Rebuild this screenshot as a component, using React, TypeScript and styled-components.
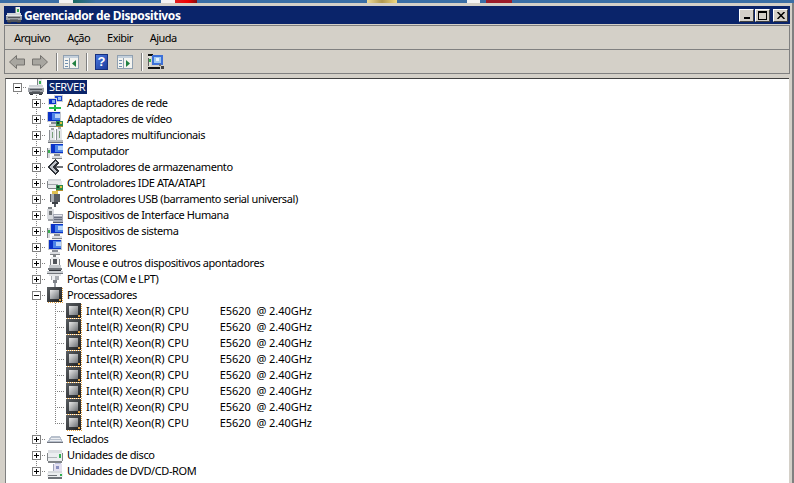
import React from 'react';
import styled, { createGlobalStyle } from 'styled-components';

const GlobalStyle = createGlobalStyle`
  html, body {
    margin: 0;
    padding: 0;
    width: 794px;
    height: 483px;
    overflow: hidden;
    background: #d4d0c8;
    font-family: "Noto Sans", "Liberation Sans", Arial, sans-serif;
    font-size: 11px;
    color: #000;
  }
`;

const DesktopStrip = styled.div`
  display: flex;
  height: 3px;
  background: #3a6ea5;
`;

const StripBit = styled.div<{ $left: number; $width: number; $fill: string }>`
  margin-left: ${p => p.$left}px;
  width: ${p => p.$width}px;
  background: ${p => p.$fill};
`;

const Frame = styled.div`
  display: flex;
  flex-direction: column;
  height: 480px;
  box-sizing: border-box;
  padding: 3px 2px 0 4px;
  background: #d4d0c8;
  border-right: 2px solid #808080;
`;

const TitleBar = styled.div`
  display: flex;
  align-items: center;
  height: 18px;
  flex: none;
  background: #0a246a;
  color: #fff;
  padding-left: 2px;
  padding-right: 2px;
`;

const TitleText = styled.div`
  font-weight: 700;
  font-size: 12px;
  letter-spacing: -0.37px;
  margin-left: 2px;
  flex: 1;
  white-space: nowrap;
`;

const WinButton = styled.div<{ $gap?: number }>`
  width: 15px;
  height: 13px;
  box-sizing: border-box;
  margin-left: ${p => p.$gap ?? 1}px;
  background: #d4d0c8;
  border-top: 1px solid #fff;
  border-left: 1px solid #fff;
  border-right: 1px solid #404040;
  border-bottom: 1px solid #404040;
  display: flex;
  align-items: center;
  justify-content: center;
`;

const Band = styled.div<{ $top?: boolean }>`
  display: flex;
  align-items: center;
  flex: none;
  height: ${p => (p.$top ? 25 : 24)}px;
  box-sizing: border-box;
  border-top: ${p => (p.$top ? '1px solid #808080' : '0')};
  border-bottom: 1px solid #808080;
  border-left: 1px solid #808080;
  border-right: 1px solid #808080;
  margin-top: ${p => (p.$top ? 1 : 0)}px;
`;

const MenuBar = styled(Band)`
  padding-left: 9px;
  gap: 17px;
`;

const MenuItem = styled.span`
  font-size: 11px;
  letter-spacing: -0.55px;
  color: #000;
`;

const ToolBar = styled(Band)`
  padding-left: 4px;
`;

const ToolIcon = styled.div<{ $left?: number }>`
  width: 16px;
  height: 16px;
  flex: none;
  margin-left: ${p => p.$left ?? 0}px;
`;

const ToolSep = styled.div<{ $left: number }>`
  width: 1px;
  height: 18px;
  flex: none;
  margin-left: ${p => p.$left}px;
  background: #808080;
  box-shadow: 1px 0 0 #fff;
`;

const HelpIcon = styled.div`
  width: 13px;
  height: 16px;
  flex: none;
  margin-left: 8px;
  background: linear-gradient(135deg, #4a78e0, #1c3c9c);
  border: 1px solid #16307e;
  box-sizing: border-box;
  color: #fff;
  font-family: "Liberation Sans", Arial, sans-serif;
  font-weight: 700;
  font-size: 13px;
  line-height: 14px;
  text-align: center;
`;

const Client = styled.div`
  flex: 1;
  min-height: 0;
  margin-top: 4px;
  margin-left: 1px;
  margin-right: 1px;
  background: #fff;
  border-top: 1px solid #404040;
  border-left: 1px solid #808080;
  padding-left: 2px;
  overflow: hidden;
`;

const Row = styled.div`
  display: flex;
  align-items: center;
  height: 16px;
  white-space: pre;
`;

const dotV = 'repeating-linear-gradient(to bottom, #808080 0 1px, transparent 1px 2px)';
const dotH = 'repeating-linear-gradient(to right, #808080 0 1px, transparent 1px 2px)';

type GuideKind = 'none' | 'root' | 'through' | 'last' | 'pipe';

const guideBackground = (k: GuideKind) => {
  const horiz = `${dotH} 9px 8px / 10px 1px no-repeat`;
  const full = `${dotV} 9px 0 / 1px 16px no-repeat`;
  const half = `${dotV} 9px 0 / 1px 8px no-repeat`;
  const lower = `${dotV} 9px 8px / 1px 8px no-repeat`;
  if (k === 'root') return `${horiz}, ${lower}`;
  if (k === 'through') return `${horiz}, ${full}`;
  if (k === 'last') return `${horiz}, ${half}`;
  if (k === 'pipe') return full;
  return 'none';
};

const Gutter = styled.div<{ $kind: GuideKind }>`
  width: 19px;
  height: 16px;
  flex: none;
  display: flex;
  align-items: center;
  padding-left: 5px;
  box-sizing: border-box;
  background: ${p => guideBackground(p.$kind)};
`;

const Expander = styled.div`
  width: 9px;
  height: 9px;
  box-sizing: border-box;
  border: 1px solid #808080;
  background: #fff;
  position: relative;
  display: flex;
  align-items: center;
  justify-content: center;
`;

const Dash = styled.div`
  width: 5px;
  height: 1px;
  background: #000;
`;

const Stem = styled.div`
  position: absolute;
  left: 3px;
  top: 1px;
  width: 1px;
  height: 5px;
  background: #000;
`;

const IconSlot = styled.div<{ $left: number }>`
  width: 16px;
  height: 16px;
  flex: none;
  margin-left: ${p => p.$left}px;
  background: #fff;
`;

const Label = styled.span<{ $selected?: boolean; $spread?: boolean }>`
  margin-left: ${p => (p.$selected ? 3 : 2)}px;
  padding: 0 2px;
  line-height: 14px;
  height: 14px;
  font-size: 11px;
  letter-spacing: ${p => (p.$spread ? '-0.05px' : p.$selected ? '-0.4px' : '-0.4px')};
  background: ${p => (p.$selected ? '#0a246a' : 'transparent')};
  color: ${p => (p.$selected ? '#fff' : '#000')};
`;

const Svg: React.FC<{ children: React.ReactNode }> = ({ children }) => (
  <svg width="16" height="16" viewBox="0 0 16 16" shapeRendering="crispEdges" style={{ display: 'block' }}>
    {children}
  </svg>
);

const R: React.FC<{ x: number; y: number; w: number; h: number; f: string }> = ({ x, y, w, h, f }) => (
  <rect x={x} y={y} width={w} height={h} fill={f} />
);

const Monitor: React.FC<{ x?: number }> = ({ x = 2 }) => (
  <>
    <R x={x} y={0} w={14} h={11} f="#c4c8d0" />
    <R x={x} y={0} w={14} h={1} f="#f4f4f4" />
    <R x={x + 1} y={1} w={12} h={9} f="#0a32c8" />
    <R x={x + 5} y={2} w={8} h={7} f="#4c84e8" />
    <R x={x + 8} y={3} w={5} h={4} f="#b8d4f8" />
    <R x={x + 4} y={11} w={6} h={2} f="#8a8e96" />
    <R x={x + 2} y={13} w={10} h={2} f="#dcdee2" />
    <R x={x + 2} y={15} w={10} h={1} f="#808488" />
  </>
);

const GreenCard = () => (
  <>
    <R x={9} y={10} w={7} h={5} f="#2f8a4c" />
    <R x={10} y={11} w={2} h={2} f="#10401f" />
    <R x={13} y={11} w={2} h={2} f="#e0c040" />
    <R x={9} y={15} w={7} h={1} f="#b09030" />
  </>
);

const ServerIcon = () => (
  <Svg>
    <R x={9} y={0} w={5} h={6} f="#e8eaec" />
    <R x={9} y={0} w={1} h={6} f="#808488" />
    <R x={11} y={2} w={2} h={3} f="#38b050" />
    <R x={1} y={6} w={14} h={2} f="#d0d4d8" />
    <R x={0} y={8} w={16} h={5} f="#9ca0a6" />
    <R x={0} y={8} w={16} h={1} f="#e4e6e8" />
    <R x={2} y={10} w={12} h={1} f="#50545a" />
    <R x={4} y={12} w={8} h={1} f="#70747a" />
    <R x={1} y={13} w={14} h={2} f="#50545a" />
    <R x={2} y={15} w={3} h={1} f="#303438" />
    <R x={11} y={15} w={3} h={1} f="#303438" />
  </Svg>
);

const NetworkIcon = () => (
  <Svg>
    <R x={7} y={0} w={9} h={7} f="#c8ccd4" />
    <R x={8} y={1} w={7} h={5} f="#1a44d0" />
    <R x={11} y={2} w={3} h={3} f="#9cc0f4" />
    <R x={1} y={3} w={9} h={7} f="#d4d8dc" />
    <R x={2} y={4} w={7} h={5} f="#0a32c8" />
    <R x={5} y={5} w={3} h={3} f="#80acf0" />
    <R x={7} y={10} w={2} h={2} f="#20b040" />
    <R x={2} y={12} w={12} h={2} f="#20c048" />
    <R x={7} y={14} w={2} h={2} f="#109030" />
  </Svg>
);

const VideoIcon = () => (
  <Svg>
    <Monitor x={0} />
    <GreenCard />
  </Svg>
);

const MultiIcon = () => (
  <Svg>
    <R x={2} y={3} w={1} h={10} f="#8a8e94" />
    <R x={3} y={3} w={5} h={10} f="#e2e4e8" />
    <R x={4} y={1} w={3} h={2} f="#a0a4aa" />
    <R x={5} y={5} w={1} h={6} f="#78a078" />
    <R x={9} y={2} w={1} h={11} f="#8a8e94" />
    <R x={10} y={2} w={5} h={11} f="#e2e4e8" />
    <R x={11} y={0} w={3} h={2} f="#a0a4aa" />
    <R x={12} y={4} w={1} h={7} f="#78a078" />
    <R x={1} y={13} w={15} h={2} f="#b4b8bc" />
    <R x={1} y={15} w={15} h={1} f="#70747a" />
  </Svg>
);

const ComputerIcon = () => (
  <Svg>
    <R x={0} y={5} w={3} h={10} f="#d8dade" />
    <R x={0} y={5} w={1} h={10} f="#808488" />
    <R x={1} y={7} w={2} h={3} f="#38b050" />
    <Monitor x={3} />
  </Svg>
);

const StorageIcon = () => (
  <Svg>
    <polygon points="8,0 0,8 8,16 12,12 8,8 12,4" fill="#30343a" />
    <polygon points="8,2 2,8 8,14 10,12 5,8 10,4" fill="#c0c4ca" />
    <R x={9} y={7} w={7} h={2} f="#70747a" />
  </Svg>
);

const IdeIcon = () => (
  <Svg>
    <R x={1} y={4} w={13} h={2} f="#d4d8dc" />
    <R x={0} y={6} w={15} h={7} f="#e8eaec" />
    <R x={0} y={6} w={1} h={7} f="#808488" />
    <R x={1} y={9} w={10} h={1} f="#a0a4aa" />
    <R x={1} y={13} w={14} h={1} f="#808488" />
    <GreenCard />
  </Svg>
);

const UsbIcon = () => (
  <Svg>
    <R x={5} y={0} w={6} h={3} f="#e0c050" />
    <R x={3} y={3} w={10} h={8} f="#585c62" />
    <R x={4} y={3} w={3} h={8} f="#a8acb2" />
    <R x={5} y={11} w={6} h={2} f="#3c4046" />
    <R x={7} y={13} w={2} h={3} f="#585c62" />
  </Svg>
);

const HidIcon = () => (
  <Svg>
    <R x={0} y={2} w={7} h={10} f="#d8dade" />
    <R x={1} y={0} w={4} h={2} f="#808488" />
    <R x={2} y={4} w={3} h={4} f="#707478" />
    <R x={1} y={12} w={5} h={2} f="#a0a4aa" />
    <R x={6} y={7} w={10} h={8} f="#a8acb8" />
    <R x={7} y={8} w={8} h={1} f="#e8eaf0" />
    <R x={7} y={10} w={8} h={1} f="#6a7080" />
    <R x={7} y={12} w={8} h={1} f="#6a7080" />
    <R x={6} y={15} w={10} h={1} f="#585c66" />
  </Svg>
);

const MonitorIcon = () => (
  <Svg>
    <Monitor x={1} />
  </Svg>
);

const MouseIcon = () => (
  <Svg>
    <R x={6} y={0} w={3} h={2} f="#808488" />
    <R x={4} y={2} w={8} h={2} f="#e8eaec" />
    <R x={3} y={4} w={10} h={6} f="#f2f2f2" />
    <R x={6} y={4} w={4} h={5} f="#50545a" />
    <R x={3} y={4} w={1} h={6} f="#808488" />
    <R x={12} y={4} w={1} h={6} f="#808488" />
    <R x={2} y={10} w={12} h={3} f="#c4c8cc" />
    <R x={1} y={13} w={14} h={2} f="#70747a" />
    <R x={2} y={15} w={12} h={1} f="#30343a" />
  </Svg>
);

const PortIcon = () => (
  <Svg>
    <R x={0} y={0} w={16} h={2} f="#c8ccd0" />
    <R x={0} y={2} w={16} h={1} f="#70747a" />
    <R x={2} y={3} w={12} h={2} f="#e4e6e8" />
    <R x={4} y={5} w={8} h={4} f="#a8acb2" />
    <R x={5} y={5} w={3} h={4} f="#eceef0" />
    <R x={6} y={9} w={4} h={3} f="#80848a" />
    <R x={7} y={12} w={2} h={4} f="#a0a4aa" />
  </Svg>
);

const CpuIcon = () => (
  <svg width="16" height="16" viewBox="0 0 16 16" style={{ display: 'block' }}>
    <defs>
      <linearGradient id="cpu-core" x1="0" y1="0" x2="1" y2="1">
        <stop offset="0" stopColor="#e8e8e8" />
        <stop offset="1" stopColor="#6c7074" />
      </linearGradient>
      <linearGradient id="cpu-body" x1="0" y1="0" x2="1" y2="1">
        <stop offset="0" stopColor="#5c6064" />
        <stop offset="1" stopColor="#1c1e20" />
      </linearGradient>
    </defs>
    <rect x="0" y="0" width="15" height="15" fill="url(#cpu-body)" />
    <rect x="3" y="3" width="9" height="9" fill="url(#cpu-core)" />
    <path d="M1 15.5H16M15.5 1V15" stroke="#e0a040" strokeWidth="1" strokeDasharray="1 1" />
    <rect x="12" y="12" width="2" height="2" fill="#e0a040" />
  </svg>
);

const KeyboardIcon = () => (
  <Svg>
    <polygon points="4,5 13,5 16,11 0,11" fill="#b8c0cc" />
    <R x={4} y={7} w={9} h={1} f="#eceef2" />
    <R x={3} y={9} w={11} h={1} f="#eceef2" />
    <R x={0} y={11} w={16} h={1} f="#70747e" />
  </Svg>
);

const DiskIcon = () => (
  <Svg>
    <R x={1} y={3} w={14} h={3} f="#dcdee2" />
    <R x={0} y={6} w={16} h={8} f="#eceef0" />
    <R x={0} y={6} w={1} h={8} f="#808488" />
    <R x={15} y={6} w={1} h={8} f="#808488" />
    <R x={12} y={7} w={2} h={4} f="#30b050" />
    <R x={1} y={10} w={9} h={1} f="#b0b4b8" />
    <R x={1} y={14} w={14} h={2} f="#808488" />
  </Svg>
);

const DvdIcon = () => (
  <Svg>
    <R x={8} y={0} w={6} h={1} f="#c0c4e0" />
    <R x={6} y={1} w={9} h={7} f="#e4e0f0" />
    <R x={9} y={3} w={3} h={3} f="#8a90c0" />
    <R x={6} y={1} w={1} h={7} f="#a0a4b8" />
    <R x={1} y={8} w={14} h={2} f="#d8dade" />
    <R x={0} y={10} w={16} h={4} f="#eceef0" />
    <R x={1} y={12} w={9} h={1} f="#70747a" />
    <R x={13} y={11} w={2} h={2} f="#30b050" />
    <R x={1} y={14} w={14} h={2} f="#70747a" />
  </Svg>
);

const BackArrow: React.FC<{ flip?: boolean }> = ({ flip }) => (
  <svg width="16" height="16" viewBox="0 0 16 16" style={{ display: 'block', transform: flip ? 'scaleX(-1)' : undefined }}>
    <polygon points="0.5,8 7.5,1.5 7.5,5 15.5,5 15.5,11 7.5,11 7.5,14.5" fill="#a8a6a0" stroke="#74726e" />
  </svg>
);

const PaneIcon: React.FC<{ arrow: string; flip?: boolean }> = ({ arrow, flip }) => (
  <Svg>
    <R x={0} y={1} w={16} h={14} f="#90a0b0" />
    <R x={1} y={2} w={14} h={12} f="#f4f4f0" />
    <R x={1} y={2} w={14} h={2} f="#c4d0dc" />
    <R x={6} y={4} w={1} h={10} f="#90a0b0" />
    <R x={2} y={6} w={3} h={1} f="#7090b0" />
    <R x={2} y={9} w={3} h={1} f="#7090b0" />
    <R x={2} y={12} w={3} h={1} f="#7090b0" />
    {flip ? (
      <polygon points="9,6 13,9.5 9,13" fill={arrow} shapeRendering="auto" />
    ) : (
      <polygon points="13,6 9,9.5 13,13" fill={arrow} shapeRendering="auto" />
    )}
  </Svg>
);

const ScanIcon = () => (
  <Svg>
    <R x={0} y={0} w={5} h={2} f="#101010" />
    <R x={0} y={2} w={3} h={10} f="#e0e0d8" />
    <R x={0} y={4} w={1} h={8} f="#606060" />
    <R x={1} y={5} w={2} h={3} f="#30b050" />
    <R x={4} y={1} w={11} h={10} f="#3c70d8" />
    <R x={6} y={3} w={7} h={6} f="#a0c8f0" />
    <R x={8} y={4} w={3} h={3} f="#e8f2fc" />
    <R x={0} y={13} w={12} h={2} f="#101010" />
    <R x={11} y={10} w={2} h={2} f="#707070" />
    <R x={13} y={12} w={3} h={3} f="#404040" />
  </Svg>
);

const MinGlyph = () => (
  <svg width="8" height="7" viewBox="0 0 8 7" shapeRendering="crispEdges" style={{ display: 'block' }}>
    <rect x="1" y="5" width="6" height="2" fill="#000" />
  </svg>
);

const MaxGlyph = () => (
  <svg width="9" height="9" viewBox="0 0 9 9" shapeRendering="crispEdges" style={{ display: 'block' }}>
    <path d="M0 0h9v9H0zM1 2v6h7V2z" fillRule="evenodd" fill="#000" />
  </svg>
);

const CloseGlyph = () => (
  <svg width="8" height="7" viewBox="0 0 8 7" style={{ display: 'block' }}>
    <path d="M0.5 0L7.5 7M7.5 0L0.5 7" stroke="#000" strokeWidth="1.5" />
  </svg>
);

const devices: { name: string; icon: React.ReactNode }[] = [
  { name: 'Adaptadores de rede', icon: <NetworkIcon /> },
  { name: 'Adaptadores de vídeo', icon: <VideoIcon /> },
  { name: 'Adaptadores multifuncionais', icon: <MultiIcon /> },
  { name: 'Computador', icon: <ComputerIcon /> },
  { name: 'Controladores de armazenamento', icon: <StorageIcon /> },
  { name: 'Controladores IDE ATA/ATAPI', icon: <IdeIcon /> },
  { name: 'Controladores USB (barramento serial universal)', icon: <UsbIcon /> },
  { name: 'Dispositivos de Interface Humana', icon: <HidIcon /> },
  { name: 'Dispositivos de sistema', icon: <ComputerIcon /> },
  { name: 'Monitores', icon: <MonitorIcon /> },
  { name: 'Mouse e outros dispositivos apontadores', icon: <MouseIcon /> },
  { name: 'Portas (COM e LPT)', icon: <PortIcon /> },
];

const after: { name: string; icon: React.ReactNode }[] = [
  { name: 'Teclados', icon: <KeyboardIcon /> },
  { name: 'Unidades de disco', icon: <DiskIcon /> },
  { name: 'Unidades de DVD/CD-ROM', icon: <DvdIcon /> },
];

const Plus = () => (
  <Expander>
    <Dash />
    <Stem />
  </Expander>
);

const Minus = () => (
  <Expander>
    <Dash />
  </Expander>
);

const CPU_NAME = 'Intel(R) Xeon(R) CPU           E5620  @ 2.40GHz';

export default function App() {
  return (
    <>
      <GlobalStyle />
      <DesktopStrip>
        <StripBit $left={59} $width={14} $fill="#f4f4f4" />
        <StripBit $left={0} $width={23} $fill="linear-gradient(to right, #1a6a60, #3a6ea5)" />
        <StripBit $left={65} $width={14} $fill="#f4f4f4" />
        <StripBit $left={0} $width={22} $fill="linear-gradient(to right, #e02020, #f00000 60%, #801010)" />
        <StripBit $left={170} $width={30} $fill="linear-gradient(to right, #f0dc98, #b09850, #f0d880)" />
        <StripBit $left={70} $width={13} $fill="#f4f4f4" />
        <StripBit $left={6} $width={26} $fill="#9c1c28" />
        <StripBit $left={268} $width={14} $fill="#3a6ea5" />
      </DesktopStrip>
      <Frame>
        <TitleBar>
          <ServerIcon />
          <TitleText>Gerenciador de Dispositivos</TitleText>
          <WinButton><MinGlyph /></WinButton>
          <WinButton><MaxGlyph /></WinButton>
          <WinButton $gap={3}><CloseGlyph /></WinButton>
        </TitleBar>
        <MenuBar $top>
          <MenuItem>Arquivo</MenuItem>
          <MenuItem>Ação</MenuItem>
          <MenuItem>Exibir</MenuItem>
          <MenuItem>Ajuda</MenuItem>
        </MenuBar>
        <ToolBar>
          <ToolIcon><BackArrow /></ToolIcon>
          <ToolIcon $left={7}><BackArrow flip /></ToolIcon>
          <ToolSep $left={8} />
          <ToolIcon $left={6}><PaneIcon arrow="#208040" /></ToolIcon>
          <ToolSep $left={7} />
          <HelpIcon>?</HelpIcon>
          <ToolIcon $left={9}><PaneIcon arrow="#208040" flip /></ToolIcon>
          <ToolSep $left={8} />
          <ToolIcon $left={6}><ScanIcon /></ToolIcon>
        </ToolBar>
        <Client>
          <Row>
            <Gutter $kind="root"><Minus /></Gutter>
            <IconSlot $left={1}><ServerIcon /></IconSlot>
            <Label $selected>SERVER</Label>
          </Row>
          {devices.map(d => (
            <Row key={d.name}>
              <Gutter $kind="none" />
              <Gutter $kind="through"><Plus /></Gutter>
              <IconSlot $left={1}>{d.icon}</IconSlot>
              <Label>{d.name}</Label>
            </Row>
          ))}
          <Row>
            <Gutter $kind="none" />
            <Gutter $kind="through"><Minus /></Gutter>
            <IconSlot $left={1}><CpuIcon /></IconSlot>
            <Label>Processadores</Label>
          </Row>
          {Array.from({ length: 8 }, (_, i) => (
            <Row key={i}>
              <Gutter $kind="none" />
              <Gutter $kind="pipe" />
              <Gutter $kind={i === 7 ? 'last' : 'through'} />
              <IconSlot $left={1}><CpuIcon /></IconSlot>
              <Label $spread>{CPU_NAME}</Label>
            </Row>
          ))}
          {after.map((d, i) => (
            <Row key={d.name}>
              <Gutter $kind="none" />
              <Gutter $kind={i === after.length - 1 ? 'last' : 'through'}><Plus /></Gutter>
              <IconSlot $left={1}>{d.icon}</IconSlot>
              <Label>{d.name}</Label>
            </Row>
          ))}
        </Client>
      </Frame>
    </>
  );
}
